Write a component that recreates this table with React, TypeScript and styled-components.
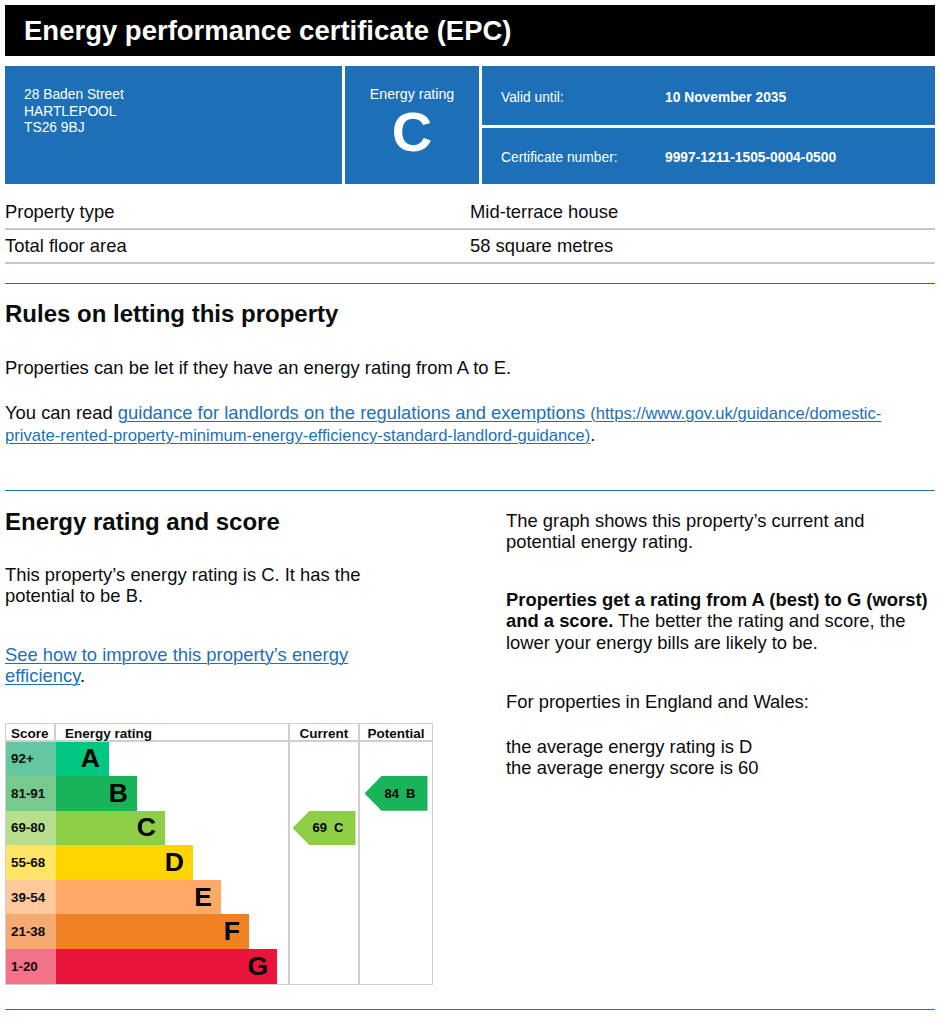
import styled, { createGlobalStyle } from "styled-components";

const BLUE = "#1d70b8";
const GRID = "#cfcfcf";

const GlobalStyle = createGlobalStyle`
  * { box-sizing: border-box; }
  body {
    margin: 0;
    background: #fff;
    color: #0b0c0c;
    font-family: "Liberation Sans", Arial, sans-serif;
  }
`;

const bands = [
  { letter: "A", range: "92+", color: "#00c781", light: "#64c7a0" },
  { letter: "B", range: "81-91", color: "#19b459", light: "#76ca8e" },
  { letter: "C", range: "69-80", color: "#8dce46", light: "#b8df8e" },
  { letter: "D", range: "55-68", color: "#ffd500", light: "#ffe465" },
  { letter: "E", range: "39-54", color: "#fcaa65", light: "#fdc99d" },
  { letter: "F", range: "21-38", color: "#ef8023", light: "#f4aa70" },
  { letter: "G", range: "1-20", color: "#e9153b", light: "#f27389" },
];

const Page = styled.div`
  padding: 5px 5px 0;
`;

const TitleBar = styled.h1`
  margin: 0;
  height: 51px;
  background: #000;
  color: #fff;
  font-size: 27.5px;
  font-weight: 700;
  line-height: 51px;
  padding-left: 19px;
`;

const Summary = styled.div`
  margin-top: 10px;
  display: grid;
  grid-template-columns: 337px 134px 1fr;
  gap: 3px;
  height: 118px;
  color: #fff;
  font-size: 13.8px;
  line-height: 16.5px;
`;

const AddressCell = styled.div`
  background: ${BLUE};
  padding: 21px 19px;
`;

const RatingCell = styled.div`
  background: ${BLUE};
  padding-top: 20px;
  text-align: center;
  font-size: 14.2px;
`;

const RatingLetter = styled.div`
  font-size: 56px;
  font-weight: 700;
  line-height: 1;
  margin-top: 1px;
`;

const MetaStack = styled.div`
  display: grid;
  grid-template-rows: 59px 1fr;
  gap: 3px;
`;

const MetaRow = styled.div<{ $offset: number }>`
  background: ${BLUE};
  display: grid;
  grid-template-columns: 164px 1fr;
  align-items: center;
  padding: ${(p) => p.$offset}px 19px 0;
`;

const MetaValue = styled.span`
  font-weight: 700;
`;

const FactTable = styled.div`
  margin-top: 12px;
`;

const FactRow = styled.div`
  display: grid;
  grid-template-columns: 465px 1fr;
  padding: 6px 0;
  font-size: 18.4px;
  line-height: 20px;
  border-bottom: 2px solid #c6c6c6;
`;

const Rule = styled.div<{ $top: number }>`
  margin-top: ${(p) => p.$top}px;
  border-top: 1px solid ${BLUE};
`;

const Heading = styled.h2<{ $top?: number }>`
  margin: ${(p) => p.$top ?? 0}px 0 0;
  font-size: 24px;
  line-height: 30px;
  font-weight: 700;
`;

const Para = styled.p<{ $top?: number; $max?: number }>`
  margin: ${(p) => p.$top ?? 0}px 0 0;
  font-size: 18.4px;
  line-height: 21.5px;
  max-width: ${(p) => (p.$max ? `${p.$max}px` : "none")};
`;

const Link = styled.a`
  color: ${BLUE};
  text-decoration: underline;
  text-decoration-thickness: 1px;
  text-underline-offset: 2px;
`;

const UrlNote = styled.span`
  font-size: 16.6px;
`;

const Split = styled.div`
  margin-top: 16px;
  display: grid;
  grid-template-columns: 465px 1fr;
  column-gap: 36px;
`;

const Column = styled.div<{ $top?: number }>`
  padding-top: ${(p) => p.$top ?? 0}px;
`;

const Chart = styled.div`
  margin-top: 36px;
  width: 428px;
  display: grid;
  grid-template-columns: 50px 234px 70px 72px;
  grid-template-rows: 18px repeat(7, 34.6px);
  border: 1px solid ${GRID};
`;

const HeadCell = styled.div<{ $divider?: boolean; $center?: boolean; $indent?: number }>`
  font-size: 13.5px;
  font-weight: 700;
  line-height: 17px;
  padding-top: 1px;
  border-bottom: 2px solid ${GRID};
  border-right: ${(p) => (p.$divider ? `2px solid ${GRID}` : "none")};
  text-align: ${(p) => (p.$center ? "center" : "left")};
  padding-left: ${(p) => p.$indent ?? 0}px;
  white-space: nowrap;
`;

const ScoreCell = styled.div<{ $bg: string }>`
  background: ${(p) => p.$bg};
  display: flex;
  align-items: center;
  padding-left: 5px;
  font-size: 13.4px;
  font-weight: 700;
`;

const BarCell = styled.div`
  display: flex;
  border-right: 2px solid ${GRID};
`;

const Bar = styled.div<{ $bg: string }>`
  background: ${(p) => p.$bg};
  display: flex;
  align-items: center;
  justify-content: flex-end;
  padding-right: 9px;
  font-size: 26.5px;
  font-weight: 700;
  color: #000;
`;

const ArrowColumn = styled.div<{ $col: number; $divider?: boolean }>`
  grid-column: ${(p) => p.$col};
  grid-row: 2 / span 7;
  display: grid;
  grid-template-rows: repeat(7, 34.6px);
  justify-items: center;
  border-right: ${(p) => (p.$divider ? `2px solid ${GRID}` : "none")};
`;

const Arrow = styled.div<{ $row: number; $bg: string }>`
  grid-row: ${(p) => p.$row};
  width: 63px;
  height: 34.6px;
  background: ${(p) => p.$bg};
  clip-path: polygon(17px 0, 100% 0, 100% 100%, 17px 100%, 0 50%);
  display: flex;
  align-items: center;
  gap: 7px;
  padding-left: 20px;
  font-size: 13px;
  font-weight: 700;
  color: #000;
`;

function RatingChart({ current, potential }: { current: number; potential: number }) {
  const cur = bands.findIndex((b) => current >= parseInt(b.range, 10));
  const pot = bands.findIndex((b) => potential >= parseInt(b.range, 10));
  return (
    <Chart>
      <HeadCell $divider $indent={5}>Score</HeadCell>
      <HeadCell $divider $indent={9}>Energy rating</HeadCell>
      <HeadCell $divider $center>Current</HeadCell>
      <HeadCell $center>Potential</HeadCell>
      <ArrowColumn $col={3} $divider>
        <Arrow $row={cur + 1} $bg={bands[cur].color}>
          <span>{current}</span>
          <span>{bands[cur].letter}</span>
        </Arrow>
      </ArrowColumn>
      <ArrowColumn $col={4}>
        <Arrow $row={pot + 1} $bg={bands[pot].color}>
          <span>{potential}</span>
          <span>{bands[pot].letter}</span>
        </Arrow>
      </ArrowColumn>
      {bands.map((b, i) => [
        <ScoreCell key={b.letter + "s"} $bg={b.light}>
          {b.range}
        </ScoreCell>,
        <BarCell key={b.letter + "b"}>
          <Bar $bg={b.color} style={{ width: 53 + i * 28 }}>
            {b.letter}
          </Bar>
        </BarCell>,
      ])}
    </Chart>
  );
}

export default function App() {
  return (
    <Page>
      <GlobalStyle />
      <TitleBar>Energy performance certificate (EPC)</TitleBar>

      <Summary>
        <AddressCell>
          28 Baden Street
          <br />
          HARTLEPOOL
          <br />
          TS26 9BJ
        </AddressCell>
        <RatingCell>
          Energy rating
          <RatingLetter>C</RatingLetter>
        </RatingCell>
        <MetaStack>
          <MetaRow $offset={6}>
            <span>Valid until:</span>
            <MetaValue>10 November 2035</MetaValue>
          </MetaRow>
          <MetaRow $offset={5}>
            <span>Certificate number:</span>
            <MetaValue>9997-1211-1505-0004-0500</MetaValue>
          </MetaRow>
        </MetaStack>
      </Summary>

      <FactTable>
        <FactRow>
          <span>Property type</span>
          <span>Mid-terrace house</span>
        </FactRow>
        <FactRow>
          <span>Total floor area</span>
          <span>58 square metres</span>
        </FactRow>
      </FactTable>

      <Rule $top={19} />
      <Heading $top={15}>Rules on letting this property</Heading>
      <Para $top={28}>Properties can be let if they have an energy rating from A to E.</Para>
      <Para $top={23} $max={915}>
        You can read{" "}
        <Link href="#">
          guidance for landlords on the regulations and exemptions{" "}
          <UrlNote>
            (https://www.gov.uk/guidance/domestic-private-rented-property-minimum-energy-efficiency-standard-landlord-guidance)
          </UrlNote>
        </Link>
        .
      </Para>

      <Rule $top={43} />
      <Split>
        <Column>
          <Heading>Energy rating and score</Heading>
          <Para $top={27} $max={400}>
            This property’s energy rating is C. It has the potential to be B.
          </Para>
          <Para $top={37} $max={400}>
            <Link href="#">See how to improve this property’s energy efficiency</Link>.
          </Para>
          <RatingChart current={69} potential={84} />
        </Column>
        <Column $top={3}>
          <Para>The graph shows this property’s current and potential energy rating.</Para>
          <Para $top={36}>
            <strong>Properties get a rating from A (best) to G (worst) and a score.</strong> The
            better the rating and score, the lower your energy bills are likely to be.
          </Para>
          <Para $top={38}>For properties in England and Wales:</Para>
          <Para $top={23}>
            the average energy rating is D
            <br />
            the average energy score is 60
          </Para>
        </Column>
      </Split>
      <Rule $top={24} />
    </Page>
  );
}
